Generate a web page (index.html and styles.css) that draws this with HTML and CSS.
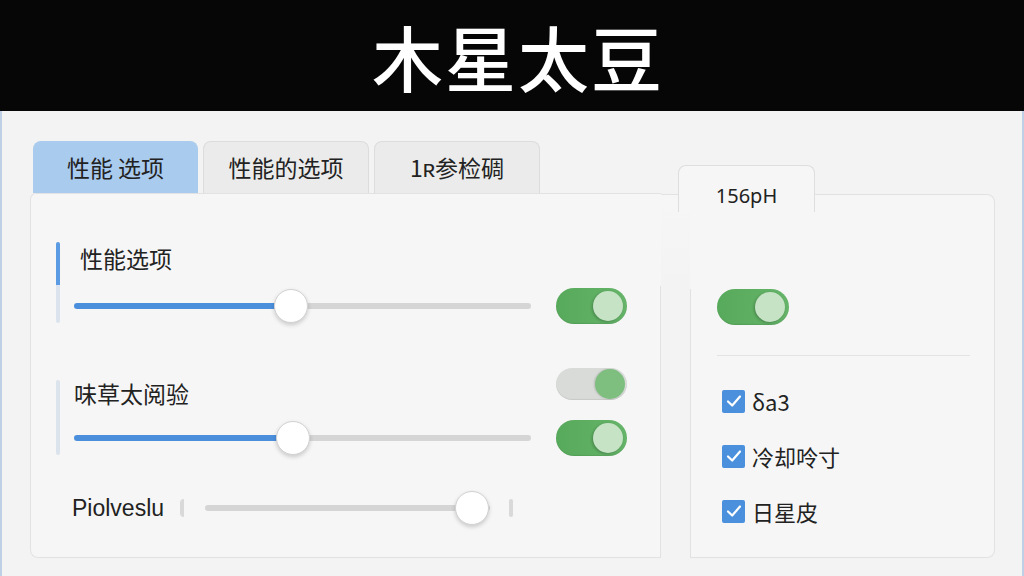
FILE: index.html
```html
<!DOCTYPE html>
<html lang="zh">
<head>
<meta charset="utf-8">
<title>木星太豆</title>
<link rel="stylesheet" href="styles.css">
</head>
<body>
<header class="header"><h1 class="title">木星太豆</h1></header>
<main class="main">
  <section class="left">
    <nav class="tabs">
      <div class="tab tab-active">性能 选项</div>
      <div class="tab">性能的选项</div>
      <div class="tab">1ʀ参检碉</div>
    </nav>
    <div class="card">
      <div class="group group1">
        <div class="accent accent-blue"></div>
        <div class="group-body">
          <div class="row row-label"><span class="label label-indent">性能选项</span></div>
          <div class="row row-ctrl">
            <div class="slider"><div class="fill" style="width:217px"></div><div class="thumb"></div><div class="rest"></div></div>
            <div class="toggle"><div class="knob"></div></div>
          </div>
        </div>
      </div>
      <div class="group group2">
        <div class="accent accent-gray"></div>
        <div class="group-body">
          <div class="row row-label2">
            <span class="label label-low">味草太阅验</span>
            <div class="toggle toggle-off"><div class="knob"></div></div>
          </div>
          <div class="row row-ctrl row-ctrl2">
            <div class="slider"><div class="fill" style="width:219px"></div><div class="thumb"></div><div class="rest"></div></div>
            <div class="toggle"><div class="knob"></div></div>
          </div>
        </div>
      </div>
      <div class="row row3">
        <span class="label label-latin">Piolveslu</span>
        <span class="mark mark-left"></span>
        <div class="slider slider3"><div class="fill fill-gray" style="width:267px"></div><div class="thumb"></div><div class="rest"></div></div>
        <span class="mark mark-right"></span>
      </div>
    </div>
  </section>
  <section class="right">
    <div class="rtab">156pH</div>
    <div class="rbody">
      <div class="bridge"></div>
      <div class="rcard">
        <div class="toggle toggle-r"><div class="knob"></div></div>
        <div class="sep"></div>
        <ul class="checks">
          <li class="check"><span class="box"><svg viewBox="0 0 22 22" width="22" height="22"><path d="M5 11.5 L9.2 15.5 L17 6.5" fill="none" stroke="#fff" stroke-width="2.2" stroke-linecap="round" stroke-linejoin="round"/></svg></span><span class="label">δa3</span></li>
          <li class="check"><span class="box"><svg viewBox="0 0 22 22" width="22" height="22"><path d="M5 11.5 L9.2 15.5 L17 6.5" fill="none" stroke="#fff" stroke-width="2.2" stroke-linecap="round" stroke-linejoin="round"/></svg></span><span class="label">冷却呤寸</span></li>
          <li class="check"><span class="box"><svg viewBox="0 0 22 22" width="22" height="22"><path d="M5 11.5 L9.2 15.5 L17 6.5" fill="none" stroke="#fff" stroke-width="2.2" stroke-linecap="round" stroke-linejoin="round"/></svg></span><span class="label">日星皮</span></li>
        </ul>
      </div>
    </div>
  </section>
</main>
</body>
</html>
```
FILE: styles.css
```css
* { box-sizing: border-box; }
html, body { margin: 0; padding: 0; }
body {
  width: 1024px;
  height: 576px;
  overflow: hidden;
  background: #f3f3f3;
  font-family: "Noto Sans", "Noto Sans CJK SC", sans-serif;
  color: #222;
}
.header {
  height: 111px;
  background: #060606;
  display: flex;
  align-items: center;
  justify-content: center;
  padding-left: 12px;
}
.title {
  margin: 0;
  color: #fff;
  font-family: "Noto Sans CJK SC", sans-serif;
  font-weight: 500;
  font-size: 71px;
  line-height: 1;
  letter-spacing: 2px;
}
.main {
  height: 465px;
  display: flex;
  padding: 30px 0 0 28px;
  border-left: 2px solid #bdd0e6;
  border-right: 2px solid #bdd0e6;
  background: #f3f3f3;
}
.left { width: 631px; flex: 0 0 631px; }
.tabs {
  display: flex;
  gap: 5px;
  padding-left: 3px;
  height: 52px;
}
.tab {
  width: 166px;
  height: 52px;
  display: flex;
  align-items: center;
  justify-content: center;
  font-family: "Noto Sans CJK SC", sans-serif;
  font-size: 23px;
  background: #ebebeb;
  border: 1px solid #dcdcdc;
  border-bottom: none;
  border-radius: 8px 8px 0 0;
  padding-bottom: 2px;
}
.tab-active {
  width: 165px;
  background: #a9cbee;
  border-color: #a9cbee;
}
.card {
  height: 365px;
  background-color: #f6f6f6;
  background-image: linear-gradient(to bottom, transparent 92px, #e2e2e2 92px);
  background-size: 1px 100%;
  background-position: right top;
  background-repeat: no-repeat;
  border: 1px solid #e2e2e2;
  border-right: none;
  border-radius: 6px 0 0 8px;
  padding: 48px 0 0 25px;
}
.group { display: flex; }
.accent { width: 4px; border-radius: 2px; flex: 0 0 4px; }
.accent-blue {
  height: 81px;
  background: linear-gradient(to bottom, #5a9be3 0, #5a9be3 53%, #dbe4ee 53%, #dbe4ee 100%);
}
.accent-gray {
  height: 75px;
  margin-top: 12px;
  background: #dbe3ec;
}
.group-body { display: flex; flex-direction: column; padding-left: 14px; }
.group2 { margin-top: 44px; }
.row { display: flex; align-items: center; }
.row-label { height: 32px; }
.label {
  font-family: "Noto Sans CJK SC", sans-serif;
  font-size: 22px;
  line-height: 24px;
}
.group .label { font-size: 23px; }
.label-indent { padding-left: 6px; }
.row-ctrl { height: 36px; margin-top: 14px; gap: 25px; }
.row-label2 { height: 32px; align-items: flex-start; justify-content: space-between; width: 553px; }
.label-low { padding-top: 13px; }
.row-ctrl2 { margin-top: 20px; }
.slider {
  width: 457px;
  height: 36px;
  display: flex;
  align-items: center;
}
.fill {
  height: 6px;
  background: #4b8fdc;
  border-radius: 3px 0 0 3px;
}
.fill-gray { background: #d5d5d5; }
.thumb {
  position: relative;
  z-index: 1;
  flex: 0 0 34px;
  width: 34px;
  height: 34px;
  margin: 0 -17px;
  border-radius: 50%;
  background: #fff;
  border: 1px solid #d2d2d2;
  box-shadow: 0 2px 4px rgba(0,0,0,0.18);
}
.rest {
  flex: 1;
  height: 6px;
  background: #d5d5d5;
  border-radius: 0 3px 3px 0;
}
.toggle {
  width: 71px;
  height: 36px;
  border-radius: 18px;
  background: linear-gradient(to right, #57a95b, #66b56a);
  display: flex;
  align-items: center;
  justify-content: flex-end;
  padding: 0 4px;
  box-shadow: inset 0 -1px 1px rgba(0,0,0,0.08);
}
.knob {
  width: 30px;
  height: 30px;
  border-radius: 50%;
  background: #c6e3c6;
  box-shadow: -1px 1px 3px rgba(0,0,0,0.25);
}
.toggle-off {
  height: 32px;
  background: #d8dbd8;
  padding: 0 2px;
}
.toggle-off .knob { width: 30px; height: 30px; background: #7ebf80; box-shadow: -1px 0 2px rgba(0,0,0,0.15); }
.row3 { height: 36px; margin-top: 34px; padding-left: 16px; }
.label-latin {
  font-family: "Liberation Sans", "Noto Sans", sans-serif;
  font-size: 23px;
  width: 108px;
}
.mark {
  width: 4px;
  height: 18px;
  background: #d9d9d9;
  border-radius: 2px;
}
.mark-left { border-radius: 4px 0 0 4px; width: 4px; }
.slider3 { width: 285px; margin-left: 21px; }
.mark-right { margin-left: 19px; }
.right {
  flex: 0 0 334px;
  width: 334px;
  padding-top: 24px;
}
.rtab {
  position: relative;
  z-index: 1;
  margin-left: 17px;
  width: 137px;
  height: 47px;
  margin-bottom: -18px;
  background: #f6f6f6;
  border: 1px solid #dedede;
  border-bottom: none;
  border-radius: 8px 8px 0 0;
  display: flex;
  justify-content: center;
  padding-top: 16px;
  font-size: 20px;
  line-height: 28px;
  color: #222;
}
.rbody { display: flex; height: 364px; }
.bridge { width: 29px; border-top: 1px solid #e2e2e2; background: linear-gradient(to bottom, #f6f6f6, #f3f3f3 90px); }
.rcard {
  flex: 1;
  background-color: #f6f6f6;
  background-image: linear-gradient(to bottom, transparent 94px, #e2e2e2 94px);
  background-size: 1px 100%;
  background-repeat: no-repeat;
  background-position: left top;
  border: 1px solid #e2e2e2;
  border-left: none;
  border-radius: 0 8px 8px 0;
  padding: 94px 24px 0 27px;
}
.toggle-r { width: 72px; }
.sep { height: 1px; background: #e3e3e3; margin-top: 30px; }
.checks { list-style: none; margin: 29px 0 0; padding: 0 0 0 5px; display: flex; flex-direction: column; gap: 23px; }
.check { display: flex; align-items: center; height: 32px; gap: 7px; }
.box {
  width: 23px;
  height: 23px;
  background: #4a90dc;
  border-radius: 2px;
  display: flex;
  align-items: center;
  justify-content: center;
}
.box svg { display: block; }
```
